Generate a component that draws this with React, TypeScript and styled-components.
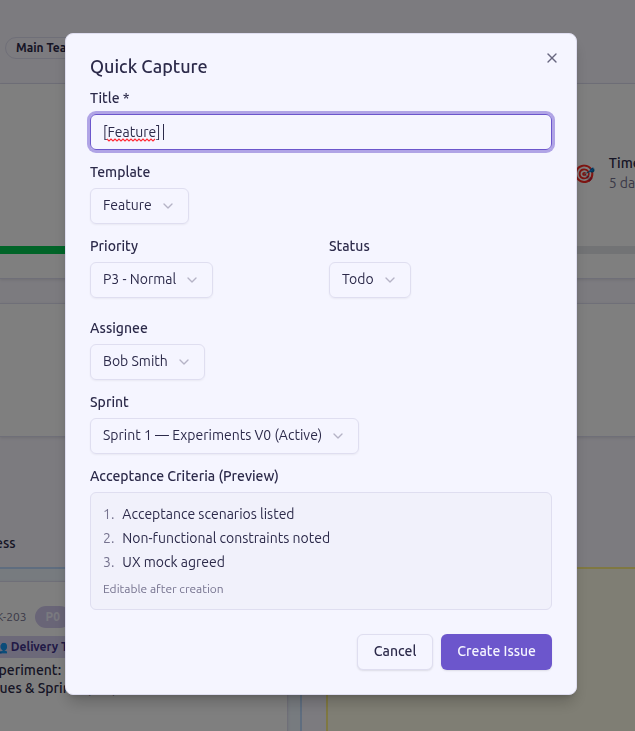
import React from "react";
import styled, { createGlobalStyle } from "styled-components";
import { ChevronDown, X } from "lucide-react";

const color = {
  page: "#f8f6ff",
  surface: "#f5f5ff",
  panel: "#f1f1fb",
  card: "#ffffff",
  text: "#2c2a4a",
  muted: "#76738f",
  border: "#dfdef0",
  primary: "#6c56cc",
  ring: "#b0a4e6",
};

const GlobalStyle = createGlobalStyle`
  *, *::before, *::after { box-sizing: border-box; }
  body {
    margin: 0;
    background: ${color.page};
    color: ${color.text};
    font: 400 14px/20px Ubuntu, "Noto Sans", sans-serif;
  }
  h2, h3, h4, p, ol { margin: 0; padding: 0; }
  button, input, select { font: inherit; color: inherit; }
`;

/* Board page behind the dialog */

const Page = styled.div`
  display: flex;
  flex-direction: column;
  height: 100vh;
  overflow: hidden;
`;

const Header = styled.header`
  display: flex;
  flex: none;
  padding: 37px 5px 24px;
  border-bottom: 1px solid ${color.border};
`;

const TeamPill = styled.span`
  padding: 2px 10px;
  border: 1px solid ${color.border};
  border-radius: 11px;
  font-size: 12px;
  font-weight: 600;
  line-height: 16px;
`;

const SprintCard = styled.section`
  flex: none;
  padding: 69px 0 24px;
  background: ${color.card};
  border-bottom: 1px solid ${color.border};
  box-shadow: 0 1px 3px rgba(0, 0, 0, 0.1);
`;

const Metric = styled.div`
  display: flex;
  align-items: center;
  justify-content: flex-end;
  gap: 14px;
  margin-right: -32px;
  margin-bottom: 53px;
`;

const MetricIcon = styled.span`
  font-size: 18px;
`;

const MetricName = styled.p`
  font-weight: 500;
`;

const MetricValue = styled.p`
  color: ${color.muted};
`;

const Track = styled.div`
  height: 8px;
  background: #e5e7eb;
`;

const Fill = styled.div`
  width: 30%;
  height: 100%;
  background: #00c950;
`;

const EmptyCard = styled.section`
  flex: none;
  height: 134px;
  margin: 24px 0;
  background: ${color.card};
  border: solid ${color.border};
  border-width: 1px 0;
  box-shadow: 0 1px 3px rgba(0, 0, 0, 0.1);
`;

const Board = styled.main`
  display: grid;
  flex: 1;
  grid-template-columns: 358px 1fr;
  gap: 24px;
  margin: 0 -24px 0 -56px;
  padding-top: 72px;
`;

const Column = styled.section`
  display: flex;
  flex-direction: column;
  gap: 14px;
`;

const ColumnTitle = styled.h3`
  height: 20px;
  font-size: 14px;
  font-weight: 500;
`;

const Lane = styled.div<{ $tone: "blue" | "yellow" }>`
  flex: 1;
  padding: 12px 12px 0;
  border: 2px solid ${(p) => (p.$tone === "blue" ? "#bedbff" : "#fff085")};
  border-bottom: 0;
  background: ${(p) => (p.$tone === "blue" ? "#eff6ff" : "#fefce8")};
`;

const Ticket = styled.article`
  display: flex;
  flex-direction: column;
  height: 100%;
  padding: 24px;
  background: ${color.card};
  border: 1px solid ${color.border};
  border-bottom: 0;
  box-shadow: 0 1px 3px rgba(0, 0, 0, 0.1);
`;

const TicketMeta = styled.div`
  display: flex;
  align-items: center;
  gap: 8px;
  margin-bottom: 8px;
  color: ${color.muted};
  font-size: 12px;
  line-height: 16px;
`;

const PriorityBadge = styled.span`
  padding: 3px 11px;
  border-radius: 11px;
  background: #d2caef;
  color: ${color.surface};
  font-weight: 600;
`;

const TeamTag = styled.span`
  margin-bottom: 3px;
  padding: 3px 10px;
  background: #d9d3f3;
  color: #42338c;
  font-size: 12px;
  font-weight: 600;
  line-height: 16px;
`;

const TicketTitle = styled.h4`
  font-size: 14px;
  font-weight: 500;
  line-height: 18px;
`;

/* Dialog */

const Overlay = styled.div`
  position: fixed;
  inset: 0;
  display: flex;
  align-items: center;
  justify-content: center;
  padding: 0 0 3px 7px;
  background: rgba(0, 0, 0, 0.5);
`;

const Dialog = styled.div`
  position: relative;
  display: flex;
  flex-direction: column;
  gap: 18px;
  width: 100%;
  max-width: 512px;
  padding: 24px;
  background: ${color.surface};
  border: 1px solid ${color.border};
  border-radius: 8px;
  box-shadow: 0 10px 15px -3px rgba(0, 0, 0, 0.2), 0 4px 6px -4px rgba(0, 0, 0, 0.2);
`;

const DialogTitle = styled.h2`
  font-size: 18px;
  font-weight: 500;
  line-height: 16px;
`;

const CloseButton = styled.button`
  position: absolute;
  top: 16px;
  right: 16px;
  display: flex;
  padding: 0;
  border: 0;
  background: none;
  opacity: 0.7;
`;

const Form = styled.form`
  display: flex;
  flex-direction: column;
  gap: 16px;
`;

const Field = styled.div`
  display: flex;
  flex-direction: column;
  align-items: flex-start;
  gap: 10px;
`;

const FieldRow = styled.div`
  display: grid;
  grid-template-columns: 1fr 1fr;
  gap: 16px;
  margin-bottom: 8px;
`;

const Label = styled.label`
  font-size: 14px;
  font-weight: 500;
  line-height: 12px;
`;

const InputBox = styled.div`
  display: grid;
  align-items: center;
  width: 100%;

  & > * { grid-area: 1 / 1; }
`;

const TextInput = styled.input`
  width: 100%;
  height: 36px;
  padding: 4px 12px;
  border: 1px solid ${color.primary};
  border-radius: 6px;
  outline: 0;
  background: transparent;
  box-shadow: 0 0 0 3px ${color.ring};
  caret-color: transparent;
`;

const EditMarks = styled.svg`
  margin-left: 13px;
  pointer-events: none;
`;

const SelectBox = styled.div`
  display: inline-grid;
  align-items: center;

  & > * { grid-area: 1 / 1; }

  & > svg {
    justify-self: end;
    margin-right: 13px;
    color: ${color.muted};
    opacity: 0.5;
    pointer-events: none;
  }
`;

const Select = styled.select`
  appearance: none;
  field-sizing: content;
  height: 36px;
  padding: 0 36px 2px 12px;
  border: 1px solid ${color.border};
  border-radius: 6px;
  background: transparent;
  box-shadow: 0 1px 2px rgba(0, 0, 0, 0.05);
`;

const Preview = styled.div`
  width: 100%;
  padding: 12px;
  border: 1px solid ${color.border};
  border-radius: 6px;
  background: ${color.panel};
`;

const Criteria = styled.ol`
  display: flex;
  flex-direction: column;
  gap: 6px;
  line-height: 18px;
  list-style: none;
`;

const Criterion = styled.li`
  display: flex;
  gap: 8px;
`;

const Ordinal = styled.span`
  color: ${color.muted};
`;

const Note = styled.p`
  margin-top: 10px;
  color: ${color.muted};
  font-size: 12px;
  line-height: 16px;
`;

const Actions = styled.div`
  display: flex;
  justify-content: flex-end;
  gap: 8px;
  margin-top: 8px;
`;

const Button = styled.button<{ $primary?: boolean }>`
  height: 36px;
  padding: 0 16px 2px;
  border: ${(p) => (p.$primary ? "0" : `1px solid ${color.border}`)};
  border-radius: 6px;
  background: ${(p) => (p.$primary ? color.primary : color.surface)};
  color: ${(p) => (p.$primary ? color.surface : color.text)};
  font-weight: 500;
  box-shadow: 0 1px 2px rgba(0, 0, 0, 0.1);
`;

const criteria = [
  "Acceptance scenarios listed",
  "Non-functional constraints noted",
  "UX mock agreed",
];

function SelectField({ id, label, value }: { id: string; label: string; value: string }) {
  return (
    <Field>
      <Label htmlFor={id}>{label}</Label>
      <SelectBox>
        <Select id={id} defaultValue={value}>
          <option value={value}>{value}</option>
        </Select>
        <ChevronDown size={16} aria-hidden="true" />
      </SelectBox>
    </Field>
  );
}

export default function App() {
  return (
    <>
      <GlobalStyle />
      <Page aria-hidden="true">
        <Header>
          <TeamPill>Main Team</TeamPill>
        </Header>
        <SprintCard>
          <Metric>
            <MetricIcon>🎯</MetricIcon>
            <div>
              <MetricName>Time left</MetricName>
              <MetricValue>5 days</MetricValue>
            </div>
          </Metric>
          <Track>
            <Fill />
          </Track>
        </SprintCard>
        <EmptyCard />
        <Board>
          <Column>
            <ColumnTitle>In Progress</ColumnTitle>
            <Lane $tone="blue">
              <Ticket>
                <TicketMeta>
                  TSK-203 <PriorityBadge>P0</PriorityBadge>
                </TicketMeta>
                <TeamTag>👥 Delivery Team</TeamTag>
                <TicketTitle>
                  Experiment: Build
                  <br />
                  Issues &amp; Sprints (API)
                </TicketTitle>
              </Ticket>
            </Lane>
          </Column>
          <Column>
            <ColumnTitle />
            <Lane $tone="yellow" />
          </Column>
        </Board>
      </Page>

      <Overlay>
        <Dialog role="dialog" aria-modal="true" aria-labelledby="dialog-title">
          <DialogTitle id="dialog-title">Quick Capture</DialogTitle>
          <Form onSubmit={(e) => e.preventDefault()}>
            <Field>
              <Label htmlFor="title">Title *</Label>
              <InputBox>
                <TextInput id="title" type="text" defaultValue="[Feature] " spellCheck={false} />
                <EditMarks width="64" height="20" viewBox="0 0 64 20" aria-hidden="true">
                  <path
                    d="M4 17 l2 2 l2 -2 l2 2 l2 -2 l2 2 l2 -2 l2 2 l2 -2 l2 2 l2 -2 l2 2 l2 -2 l2 2 l2 -2 l2 2 l2 -2 l2 2 l2 -2 l2 2 l2 -2 l2 2 l2 -2 l2 2 l2 -2"
                    fill="none"
                    stroke="#ff2a35"
                    strokeWidth="1.1"
                  />
                  <path d="M60.5 2 V18" stroke={color.text} />
                </EditMarks>
              </InputBox>
            </Field>
            <SelectField id="template" label="Template" value="Feature" />
            <FieldRow>
              <SelectField id="priority" label="Priority" value="P3 - Normal" />
              <SelectField id="status" label="Status" value="Todo" />
            </FieldRow>
            <SelectField id="assignee" label="Assignee" value="Bob Smith" />
            <SelectField id="sprint" label="Sprint" value="Sprint 1 — Experiments V0 (Active)" />
            <Field>
              <Label as="h3">Acceptance Criteria (Preview)</Label>
              <Preview>
                <Criteria>
                  {criteria.map((text, i) => (
                    <Criterion key={text}>
                      <Ordinal>{i + 1}.</Ordinal>
                      {text}
                    </Criterion>
                  ))}
                </Criteria>
                <Note>Editable after creation</Note>
              </Preview>
            </Field>
            <Actions>
              <Button type="button">Cancel</Button>
              <Button type="submit" $primary>
                Create Issue
              </Button>
            </Actions>
          </Form>
          <CloseButton type="button" aria-label="Close">
            <X size={16} />
          </CloseButton>
        </Dialog>
      </Overlay>
    </>
  );
}
